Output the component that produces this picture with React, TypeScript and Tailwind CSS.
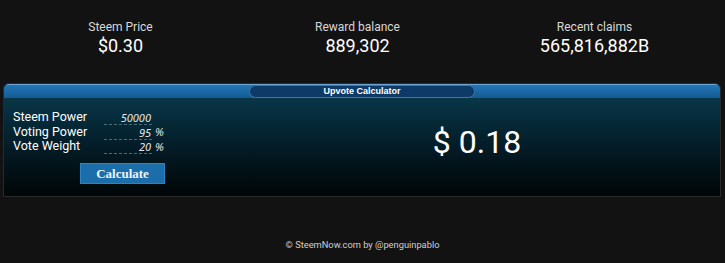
import React from 'react';

const stats = [
  { label: 'Steem Price', value: '$0.30' },
  { label: 'Reward balance', value: '889,302' },
  { label: 'Recent claims', value: '565,816,882B' },
];

const fields = [
  { label: 'Steem Power', value: '50000', suffix: '' },
  { label: 'Voting Power', value: '95', suffix: '%' },
  { label: 'Vote Weight', value: '20', suffix: '%' },
];

export default function App() {
  return (
    <div className="w-[725px] h-[263px] bg-[#121212] text-white font-['Roboto',sans-serif] overflow-hidden">
      {/* Stats */}
      <div className="grid grid-cols-3 w-[711px] ml-[2px] pt-[19px] h-[83px]">
        {stats.map((s) => (
          <div key={s.label} className="flex flex-col items-center">
            <div className="text-[12px] leading-[16px] text-[#d8d8d8]">{s.label}</div>
            <div className="text-[18px] leading-[22px] text-white">{s.value}</div>
          </div>
        ))}
      </div>

      {/* Calculator panel */}
      <div className="mx-[3px] w-[718px] h-[114px] rounded-t-[6px] border border-[#2a2a2a] bg-gradient-to-b from-[#0b3e52] via-[#04202c] to-[#010607] flex flex-col overflow-hidden">
        <div className="h-[14px] bg-gradient-to-b from-[#2476b6] to-[#135a94] border-t border-[#6aa5d6] flex justify-center">
          <div className="w-[226px] h-[13px] rounded-full bg-[#0d3a66] border border-[#3f78a8] flex items-center justify-center">
            <span className="text-[9px] leading-none font-bold font-['Liberation_Sans',sans-serif] text-white">Upvote Calculator</span>
          </div>
        </div>
        <div className="flex flex-1">
          <div className="w-[230px] pl-[9px] pt-[12px]">
            {fields.map((f) => (
              <div key={f.label} className="flex items-center h-[14.5px]">
                <span className="w-[91px] text-[12.5px] leading-none text-white">{f.label}</span>
                <span className="w-[48px] text-right border-b border-dashed border-[#4a6a78] text-[11px] leading-[13px] italic font-['Noto_Sans',sans-serif] text-[#e8e8e8] pr-[1px] translate-y-[1px]">
                  {f.value}
                </span>
                {f.suffix && (
                  <span className="ml-[3px] text-[11px] leading-none italic font-['Noto_Sans',sans-serif] text-[#e8e8e8]">{f.suffix}</span>
                )}
              </div>
            ))}
            <button className="mt-[9px] ml-[67px] w-[85px] h-[21px] bg-[#1b6ea9] border border-[#2b85c2] text-[13px] font-bold font-['Liberation_Serif',serif] text-[#eef4fa] leading-none">
              Calculate
            </button>
          </div>
          <div className="flex-1 flex items-center justify-center pb-[10px]">
            <span className="text-[32px] leading-none text-white">$ 0.18</span>
          </div>
        </div>
      </div>

      <div className="text-center mt-[41px] text-[9.3px] text-[#cfcfcf]">
        © SteemNow.com by @penguinpablo
      </div>
    </div>
  );
}
